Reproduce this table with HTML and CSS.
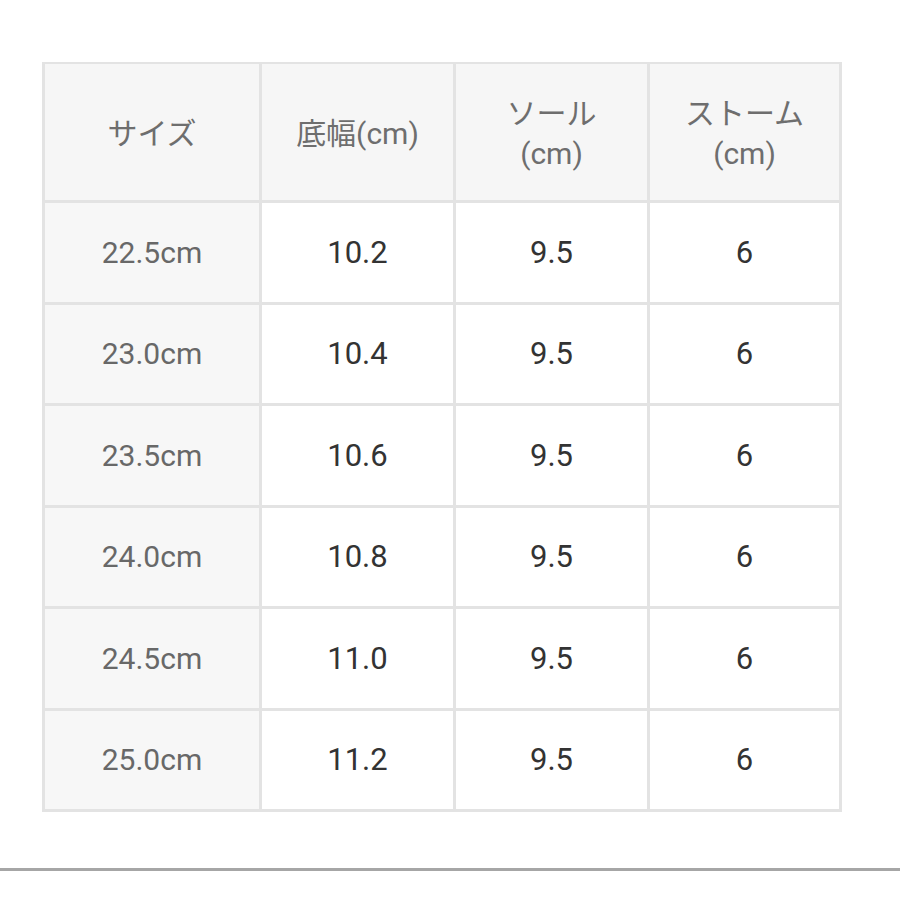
FILE: index.html
```html
<!DOCTYPE html>
<html lang="ja">
<head>
<meta charset="utf-8">
<link rel="stylesheet" href="styles.css">
</head>
<body>
<div class="page">
  <div class="size-table">
    <div class="cell head">サイズ</div>
    <div class="cell head">底幅(cm)</div>
    <div class="cell head">ソール<br>(cm)</div>
    <div class="cell head">ストーム<br>(cm)</div>

    <div class="cell label">22.5cm</div>
    <div class="cell val">10.2</div>
    <div class="cell val">9.5</div>
    <div class="cell val">6</div>

    <div class="cell label">23.0cm</div>
    <div class="cell val">10.4</div>
    <div class="cell val">9.5</div>
    <div class="cell val">6</div>

    <div class="cell label">23.5cm</div>
    <div class="cell val">10.6</div>
    <div class="cell val">9.5</div>
    <div class="cell val">6</div>

    <div class="cell label">24.0cm</div>
    <div class="cell val">10.8</div>
    <div class="cell val">9.5</div>
    <div class="cell val">6</div>

    <div class="cell label">24.5cm</div>
    <div class="cell val">11.0</div>
    <div class="cell val">9.5</div>
    <div class="cell val">6</div>

    <div class="cell label">25.0cm</div>
    <div class="cell val">11.2</div>
    <div class="cell val">9.5</div>
    <div class="cell val">6</div>
  </div>
  <div class="divider"></div>
</div>
</body>
</html>
```

FILE: styles.css
```css
html, body {
  margin: 0;
  padding: 0;
  background: #ffffff;
}
.page {
  padding-top: 62px;
  font-family: "Roboto", "Noto Sans CJK JP", sans-serif;
}
.size-table {
  margin-left: 42px;
  width: 800px;
  box-sizing: border-box;
  display: grid;
  grid-template-columns: 214px 191px 191px 189px;
  grid-template-rows: 136px repeat(6, 98.5px);
  gap: 3px;
  padding: 2px 3px 3px 3px;
  background: #e3e3e3;
}
.cell {
  display: flex;
  align-items: center;
  justify-content: center;
  text-align: center;
}
.head {
  background: #f6f6f6;
  color: #6e6e6e;
  font-size: 30px;
  line-height: 40px;
  padding-top: 4px;
}
.label {
  background: #f7f7f7;
  color: #686868;
  font-size: 30px;
}
.val {
  background: #ffffff;
  color: #333333;
  font-size: 31px;
}
.divider {
  margin-top: 56px;
  height: 3px;
  background: #a6a6a6;
}
```
